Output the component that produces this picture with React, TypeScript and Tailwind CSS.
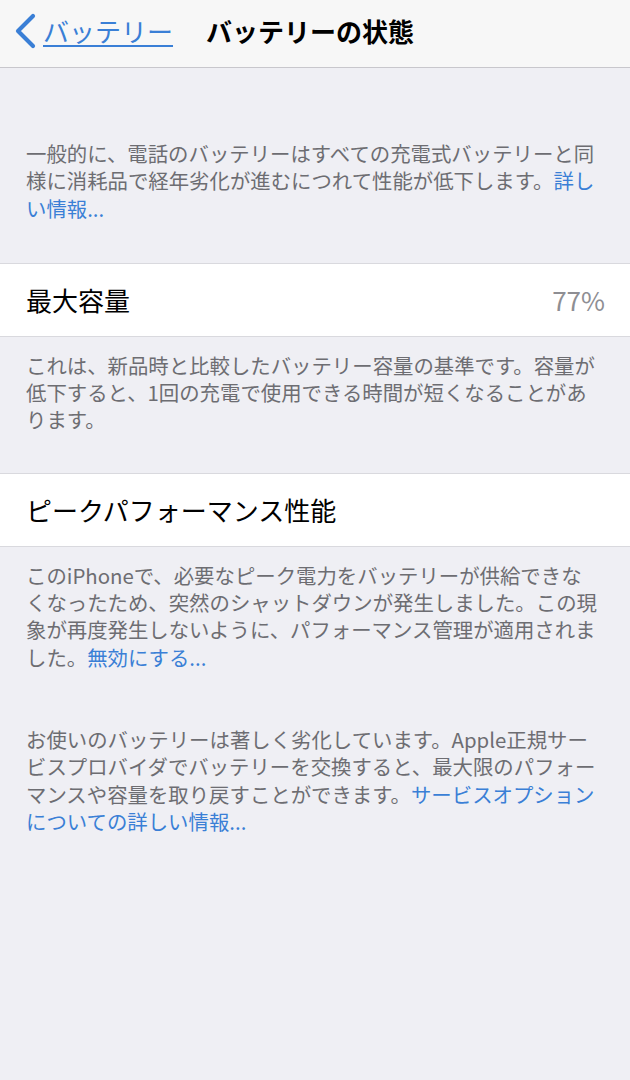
const font = { fontFamily: '"Noto Sans CJK JP", "Noto Sans", sans-serif' };

function Note({ lines, className = "" }: { lines: React.ReactNode[]; className?: string }) {
  return (
    <div className={`px-[26px] text-[20.4px] leading-[27.3px] text-[#6d6d72] ${className}`}>
      {lines.map((l, i) => (
        <div key={i} className="whitespace-nowrap">
          {l}
        </div>
      ))}
    </div>
  );
}

function Row({ label, value }: { label: string; value?: string }) {
  return (
    <div className="flex h-[74px] items-center justify-between border-y border-[#d9d9de] bg-white pl-[26px] pr-[25px]">
      <span className="text-[26px] text-black">{label}</span>
      {value && <span className="text-[26px] text-[#8e8e93]">{value}</span>}
    </div>
  );
}

const link = "text-[#3a7fd6]";

export default function App() {
  return (
    <div style={font} className="min-h-[1080px] w-[630px] bg-[#efeff4]">
      <header className="flex h-[68px] items-center border-b border-[#c8c7cc] bg-[#f7f7f7] pb-[6px]">
        <svg width="24" height="36" viewBox="0 0 24 36" className="ml-[13px]">
          <path d="M20 3 L5 18 L20 33" fill="none" stroke="#3a7fd6" strokeWidth="4.2" strokeLinecap="round" strokeLinejoin="round" />
        </svg>
        <span className="ml-[6px] text-[26px] text-[#3a7fd6] underline decoration-[1.5px] underline-offset-[3px]">
          バッテリー
        </span>
        <span className="ml-[33px] text-[26px] font-bold text-black">バッテリーの状態</span>
      </header>

      <Note
        className="pt-[72px]"
        lines={[
          "一般的に、電話のバッテリーはすべての充電式バッテリーと同",
          <>
            様に消耗品で経年劣化が進むにつれて性能が低下します。<span className={link}>詳し</span>
          </>,
          <span className={link}>い情報...</span>,
        ]}
      />

      <div className="mt-[41px]">
        <Row label="最大容量" value="77%" />
      </div>

      <Note
        className="pt-[15px]"
        lines={[
          "これは、新品時と比較したバッテリー容量の基準です。容量が",
          "低下すると、1回の充電で使用できる時間が短くなることがあ",
          "ります。",
        ]}
      />

      <div className="mt-[39px]">
        <Row label="ピークパフォーマンス性能" />
      </div>

      <Note
        className="pt-[15px]"
        lines={[
          "このiPhoneで、必要なピーク電力をバッテリーが供給できな",
          "くなったため、突然のシャットダウンが発生しました。この現",
          "象が再度発生しないように、パフォーマンス管理が適用されま",
          <>
            した。<span className={link}>無効にする...</span>
          </>,
        ]}
      />

      <Note
        className="pt-[55px]"
        lines={[
          "お使いのバッテリーは著しく劣化しています。Apple正規サー",
          "ビスプロバイダでバッテリーを交換すると、最大限のパフォー",
          <>
            マンスや容量を取り戻すことができます。<span className={link}>サービスオプション</span>
          </>,
          <span className={link}>についての詳しい情報...</span>,
        ]}
      />
    </div>
  );
}
